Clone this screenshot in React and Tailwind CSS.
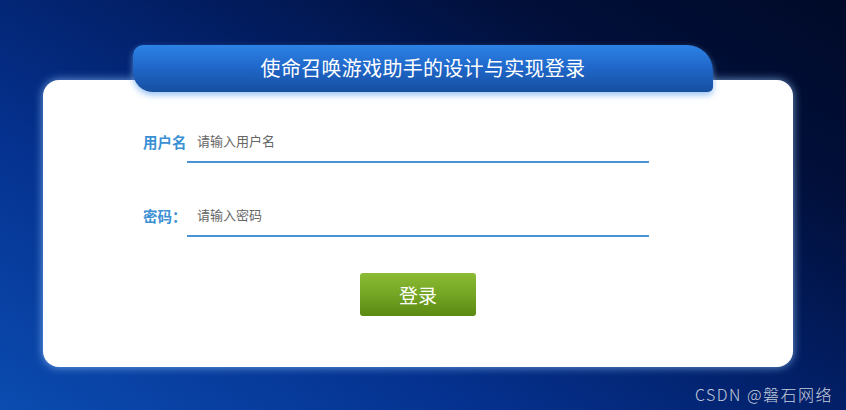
export default function App() {
  const font = { fontFamily: '"Microsoft YaHei", "Noto Sans CJK SC", "Noto Sans", sans-serif' };
  return (
    <div
      className="relative w-[846px] h-[410px] overflow-hidden bg-[linear-gradient(30deg,#0b4cb0_0%,#053290_30%,#021f66_55%,#010f3a_78%,#000a28_100%)] pt-[45px] pl-[43px]"
      style={font}
    >
      <div className="relative z-10 ml-[90px] w-[580px] h-[47px] flex items-center justify-center rounded-tl-[10px] rounded-bl-[20px] rounded-tr-[26px] rounded-br-[5px] bg-[linear-gradient(180deg,#2d82e6_0%,#1f66c8_50%,#164f9f_100%)] shadow-[0_3px_6px_rgba(110,170,240,0.7)]">
        <span className="text-white text-[20px] leading-none tracking-[0.3px] pb-[2px]">使命召唤游戏助手的设计与实现登录</span>
      </div>
      <div className="-mt-[12px] w-[750px] h-[287px] bg-white rounded-[16px] shadow-[0_0_10px_rgba(150,200,255,0.75)] pt-[44px] pl-[100px] flex flex-col">
        <div className="flex items-center">
          <span className="w-[44px] shrink-0 whitespace-nowrap text-[14.5px] font-bold text-[#3b8fd3] leading-none pb-[3px]">用户名</span>
          <div className="w-[462px] h-[39px] border-b-2 border-[#4a93d4] flex items-center pl-[10px] pb-[4px]">
            <span className="text-[13px] text-[#666] leading-none">请输入用户名</span>
          </div>
        </div>
        <div className="flex items-center mt-[35px]">
          <span className="w-[44px] shrink-0 whitespace-nowrap text-[14.5px] font-bold text-[#3b8fd3] leading-none pb-[2px]">密码：</span>
          <div className="w-[462px] h-[39px] border-b-2 border-[#4a93d4] flex items-center pl-[10px] pb-[4px]">
            <span className="text-[13px] text-[#666] leading-none">请输入密码</span>
          </div>
        </div>
        <div className="flex mt-[36px] ml-[217px]">
          <div className="w-[116px] h-[43px] rounded-[3px] bg-[linear-gradient(180deg,#8cbc34_0%,#74a524_50%,#5a8a12_100%)] flex items-center justify-center">
            <span className="text-white text-[19px] leading-none">登录</span>
          </div>
        </div>
      </div>
      <div className="absolute right-[13px] bottom-[8px] text-[16px] font-light tracking-[1.5px] text-[#c6cede] leading-none whitespace-nowrap">CSDN @磐石网络</div>
    </div>
  );
}
